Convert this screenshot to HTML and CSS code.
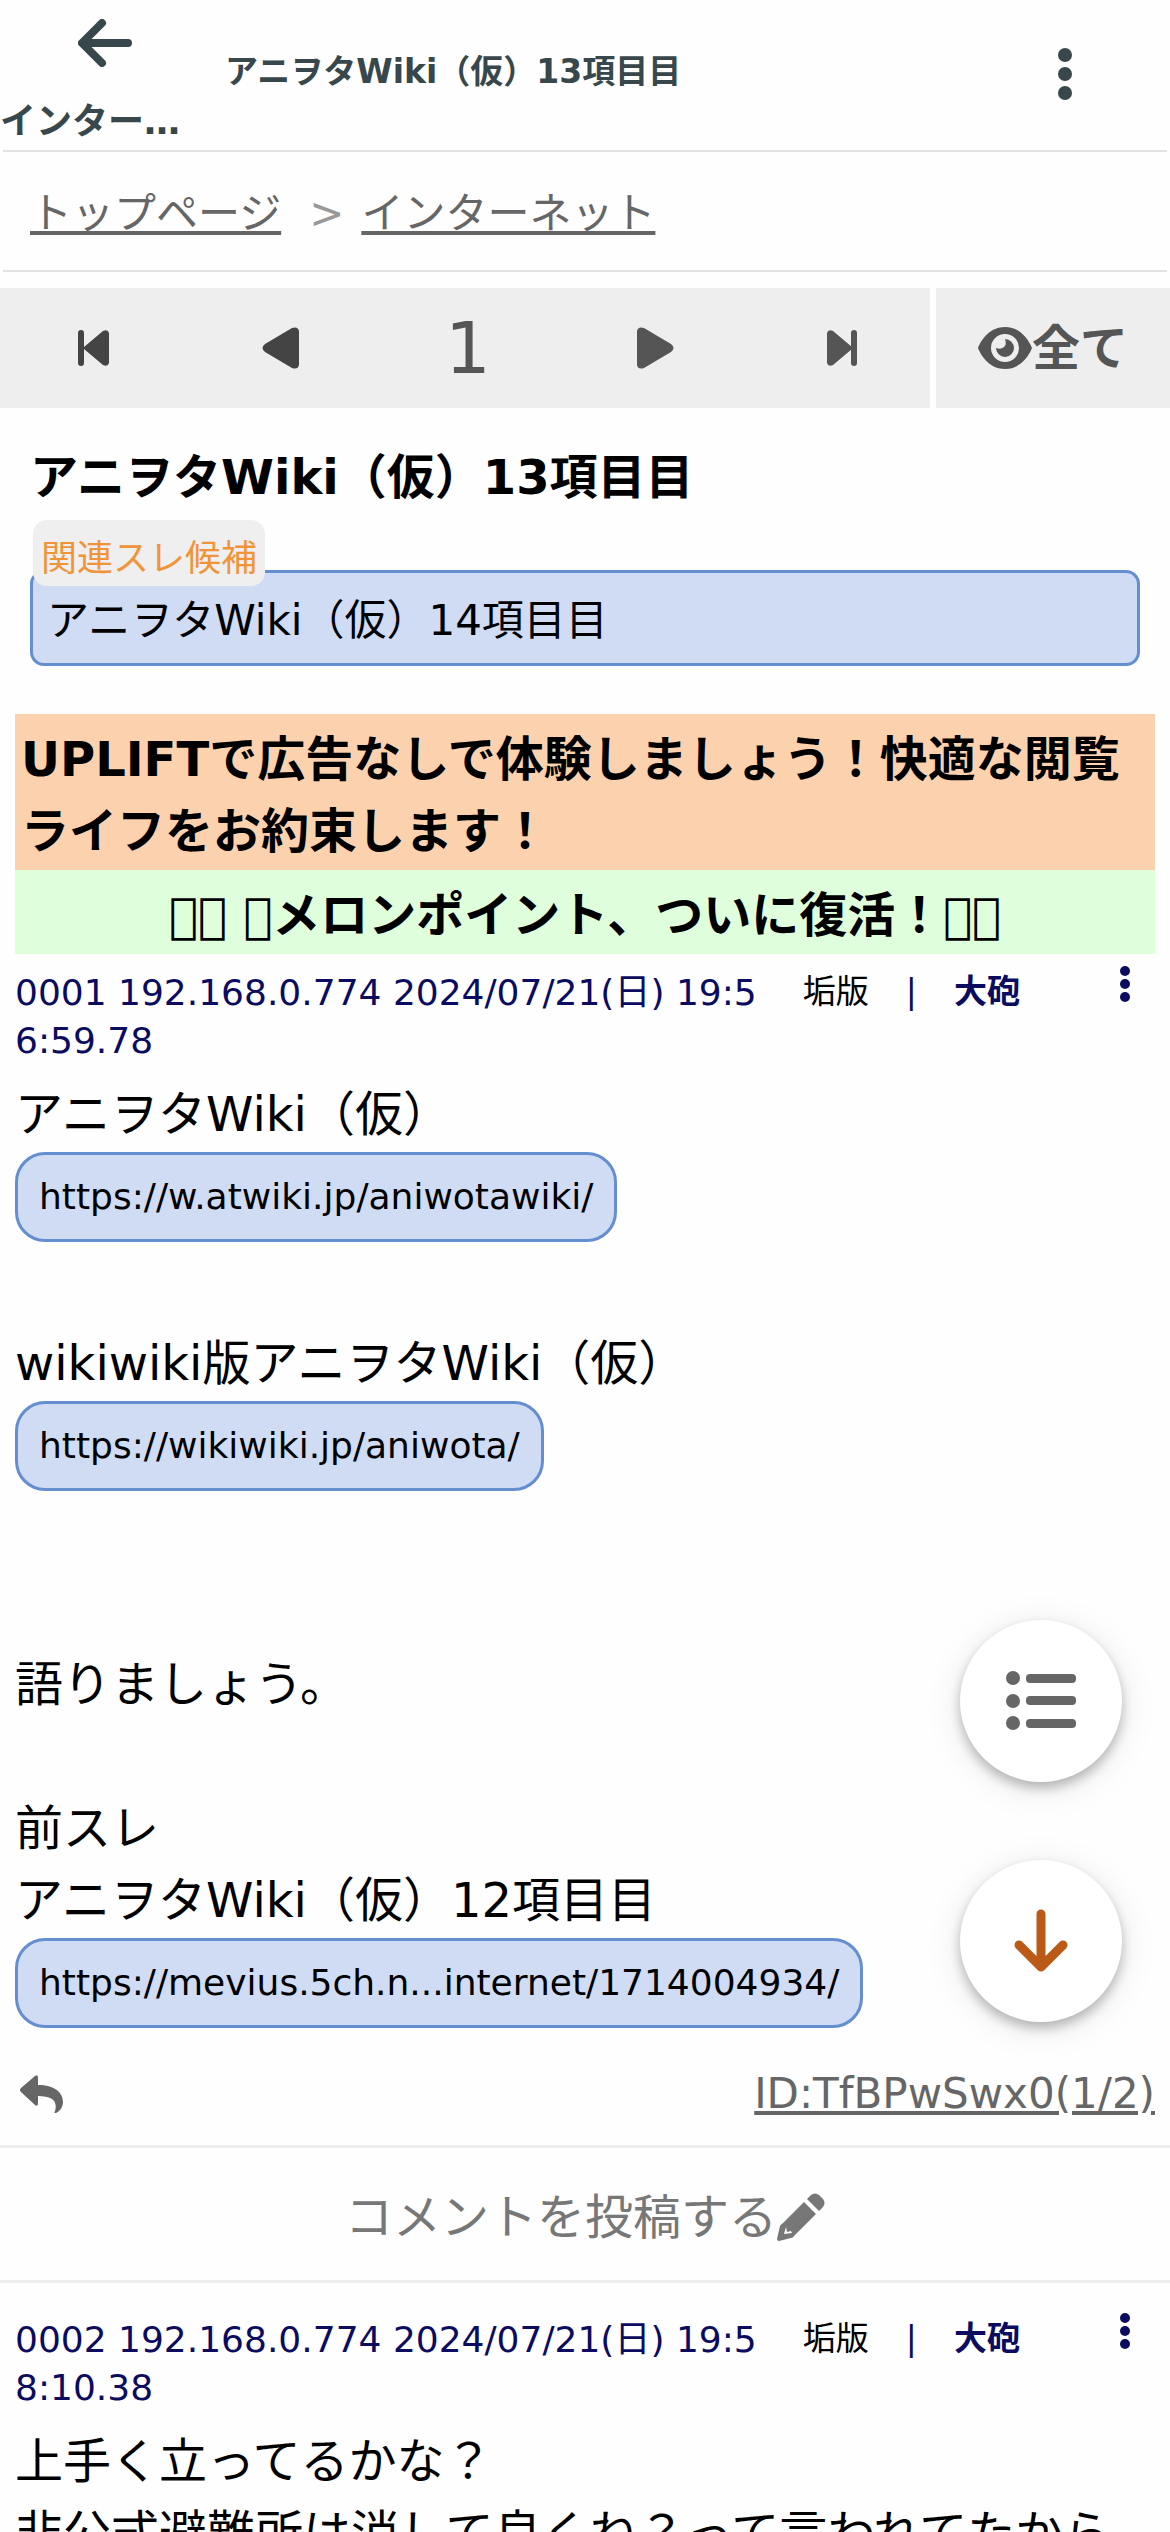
FILE: index.html
```html
<!DOCTYPE html>
<html lang="ja">

<head>
  <meta charset="UTF-8">
  <meta name="viewport" content="width=device-width, initial-scale=1.0">
  <title>アニヲタWiki（仮）13項目目</title>
  <link rel="stylesheet" href="styles.css">
</head>

<body>
  <header class="topbar">
    <a class="back" href="#">
      <svg class="back-icon" viewBox="0 0 54 48" aria-hidden="true">
        <path d="M50 24H5M24 4L4 24l20 20" />
      </svg>
      <span>インター…</span>
    </a>
    <div class="topbar-title">アニヲタWiki（仮）13項目目</div>
    <button type="button" class="topbar-menu" aria-label="メニュー">
      <svg viewBox="0 0 14 52" aria-hidden="true">
        <circle cx="7" cy="7" r="7" />
        <circle cx="7" cy="26" r="7" />
        <circle cx="7" cy="45" r="7" />
      </svg>
    </button>
  </header>

  <nav class="breadcrumb">
    <a href="#">トップページ</a>
    <span class="separator">&gt;</span>
    <a href="#">インターネット</a>
  </nav>

  <nav class="pager">
    <div class="pager-pages">
      <button type="button" class="dark" aria-label="最初">
        <svg width="32" height="36" viewBox="0 0 32 36" aria-hidden="true">
          <rect x="0" y="0" width="6" height="36" rx="3" />
          <path d="M25 1L6 17q-1 1 0 2l19 16q5 2 6-2V3q-1-4-6-2z" />
        </svg>
      </button>
      <button type="button" class="dark" aria-label="前">
        <svg width="38" height="42" viewBox="0 0 38 42" aria-hidden="true">
          <path d="M30 1L3 17q-5 4 0 8l27 16q6 2 7-3V4q-1-5-7-3z" />
        </svg>
      </button>
      <span class="pager-current">1</span>
      <button type="button" aria-label="次">
        <svg width="38" height="42" viewBox="0 0 38 42" aria-hidden="true">
          <path d="M8 1l27 16q5 4 0 8L8 41q-6 2-7-3V4q1-5 7-3z" />
        </svg>
      </button>
      <button type="button" aria-label="最後">
        <svg width="32" height="36" viewBox="0 0 32 36" aria-hidden="true">
          <path d="M7 1l19 16q1 1 0 2L7 35q-5 2-6-2V3q1-4 6-2z" />
          <rect x="25" y="0" width="6" height="36" rx="3" />
        </svg>
      </button>
    </div>
    <button type="button" class="pager-all">
      <svg width="54" height="42" viewBox="0 0 54 42" aria-hidden="true">
        <path fill-rule="evenodd" d="M27 0C13 0 4 11 0 21c4 10 13 21 27 21s23-11 27-21C50 11 41 0 27 0zM27 7a14 14 0 1 1 0 28a14 14 0 1 1 0-28z" />
        <path d="M27 12a9 9 0 1 1-9 9q5 2 8-1t1-8z" />
      </svg>
      <span>全て</span>
    </button>
  </nav>

  <section class="thread-head">
    <h1>アニヲタWiki（仮）13項目目</h1>
    <div class="related">
      <span class="related-label">関連スレ候補</span>
      <a class="related-link" href="#">アニヲタWiki（仮）14項目目</a>
    </div>
  </section>

  <div class="notices">
    <div class="notice uplift">UPLIFTで広告なしで体験しましょう！快適な閲覧ライフをお約束します！</div>
    <div class="notice melon">&#xE900;&#xE901; &#xE902;メロンポイント、ついに復活！&#xE901;&#xE900;</div>
  </div>

  <article class="post">
    <div class="post-head">
      <span class="post-info">0001 192.168.0.774 2024/07/21(日) 19:56:59.78</span>
      <span class="post-tools">
        <span class="plain">垢版</span>
        <span>|</span>
        <b>大砲</b>
      </span>
      <button type="button" class="post-menu" aria-label="投稿メニュー">
        <svg viewBox="0 0 10 36" aria-hidden="true">
          <circle cx="5" cy="5" r="5" />
          <circle cx="5" cy="18" r="5" />
          <circle cx="5" cy="31" r="5" />
        </svg>
      </button>
    </div>
    <div class="post-body">
      <p>アニヲタWiki（仮）</p>
      <a class="link" href="#">https://w.atwiki.jp/aniwotawiki/</a>
      <p class="gap">wikiwiki版アニヲタWiki（仮）</p>
      <a class="link" href="#">https://wikiwiki.jp/aniwota/</a>
      <p class="gap"><br>語りましょう。<br><br>前スレ<br>アニヲタWiki（仮）12項目目</p>
      <a class="link" href="#">https://mevius.5ch.n...internet/1714004934/</a>
    </div>
    <div class="post-foot">
      <button type="button" class="reply" aria-label="返信">
        <svg viewBox="0 0 44 38" aria-hidden="true">
          <path d="M1 13L15 1q3-2 3 2v7c16 0 25 7 25 17 0 5-3 9-7 11-1 0-2 0-1-2 3-10-3-15-17-15v7q0 4-3 2L1 17q-2-2 0-4z" />
        </svg>
      </button>
      <a class="post-id" href="#">ID:TfBPwSwx0(1/2)</a>
    </div>
  </article>

  <button type="button" class="comment">
    <span>コメントを投稿する</span>
    <svg viewBox="0 0 48 48" aria-hidden="true">
      <path fill-rule="evenodd" d="M27 9l12 12-22 22q-1 2-3 2L2 48q-2 0-2-2l3-13q0-1 2-2zM9 34l-2 7 8-1-1-2-4 1z" />
      <path d="M30 6l4-4q4-3 8 0l4 4q3 4 0 8l-4 4z" />
    </svg>
  </button>

  <article class="post second">
    <div class="post-head">
      <span class="post-info">0002 192.168.0.774 2024/07/21(日) 19:58:10.38</span>
      <span class="post-tools">
        <span class="plain">垢版</span>
        <span>|</span>
        <b>大砲</b>
      </span>
      <button type="button" class="post-menu" aria-label="投稿メニュー">
        <svg viewBox="0 0 10 36" aria-hidden="true">
          <circle cx="5" cy="5" r="5" />
          <circle cx="5" cy="18" r="5" />
          <circle cx="5" cy="31" r="5" />
        </svg>
      </button>
    </div>
    <div class="post-body">
      <p>上手く立ってるかな？<br>非公式避難所は消して良くね？って言われてたから</p>
    </div>
  </article>

  <div class="floating">
    <button type="button" class="list" aria-label="一覧">
      <svg width="70" height="60" viewBox="0 0 70 60" aria-hidden="true">
        <circle cx="7" cy="7" r="7" />
        <circle cx="7" cy="30" r="7" />
        <circle cx="7" cy="52" r="7" />
        <rect x="20" y="3" width="50" height="9" rx="4" />
        <rect x="20" y="25" width="50" height="9" rx="4" />
        <rect x="20" y="48" width="50" height="9" rx="4" />
      </svg>
    </button>
    <button type="button" class="down" aria-label="一番下へ">
      <svg width="54" height="64" viewBox="0 0 54 64" aria-hidden="true">
        <path d="M27 5v52M5 36l22 22 22-22" />
      </svg>
    </button>
  </div>
</body>

</html>
```

FILE: styles.css
```css
* {
  box-sizing: border-box;
}

body {
  margin: 0;
  height: 100vh;
  overflow: hidden;
  background: #fefefe;
  color: #000;
  font-family: "DejaVu Sans", "Noto Sans CJK JP", sans-serif;
  font-size: 48px;
  line-height: 72px;
}

button {
  display: flex;
  align-items: center;
  justify-content: center;
  padding: 0;
  border: none;
  background: none;
  color: inherit;
  font: inherit;
  cursor: pointer;
}

svg {
  display: block;
  fill: currentColor;
}

h1,
p {
  margin: 0;
}

/* Header */
.topbar {
  display: flex;
  align-items: center;
  height: 152px;
  margin: 0 3px;
  border-bottom: 2px solid #e2e2e2;
  color: #37474b;
  font-weight: bold;
}

.back {
  display: flex;
  flex-direction: column;
  width: 210px;
  margin-left: -3px;
  padding-top: 18px;
  color: inherit;
  font-size: 36px;
  line-height: 54px;
  text-decoration: none;
}

.back-icon {
  width: 54px;
  height: 48px;
  margin: 0 auto 28px;
  fill: none;
  stroke: currentColor;
  stroke-width: 8;
  stroke-linecap: round;
  stroke-linejoin: round;
}

.topbar-title {
  flex: 1;
  padding-left: 15px;
  padding-bottom: 6px;
  font-size: 33px;
  line-height: 48px;
}

.topbar-menu {
  width: 210px;
  margin-right: -3px;
  padding-bottom: 3px;
}

.topbar-menu svg {
  width: 14px;
  height: 52px;
}

.breadcrumb {
  display: flex;
  align-items: center;
  height: 120px;
  margin: 0 3px;
  padding: 5px 27px 0;
  border-bottom: 2px solid #e2e2e2;
  font-size: 42px;
  color: #999;
}

.breadcrumb a {
  color: #666;
}

.separator {
  padding: 0 17px 0 28px;
}

/* Page navigation */
.pager {
  display: flex;
  height: 120px;
  margin-top: 16px;
  color: #555;
}

.pager-pages {
  display: flex;
  flex: 1;
  background: #eee;
}

.pager-pages > * {
  flex: 1;
}

.pager .dark {
  color: #444;
}

.pager-current {
  align-self: center;
  font-size: 72px;
  text-align: center;
}

.pager-all {
  width: 20%;
  background: #eee;
  box-shadow: -6px 0 #fefefe;
  font-weight: bold;
}

.thread-head {
  padding: 33px 30px 48px;
}

.thread-head h1 {
  font-size: 48px;
  line-height: 72px;
}

.related {
  position: relative;
  margin-top: 57px;
}

.related-link {
  display: block;
  padding: 20px 14px 14px;
  border: 3px solid #648ed0;
  border-radius: 14px;
  background: #cfdcf4;
  color: #000;
  font-size: 42px;
  line-height: 56px;
  text-decoration: none;
}

/* sits over the top edge of the related thread */
.related-label {
  position: absolute;
  left: 3px;
  bottom: 80px;
  padding: 12px 8px 0;
  border-radius: 14px;
  background: #efefef;
  color: #f0943a;
  font-size: 36px;
  line-height: 54px;
}

.notices {
  margin: 0 15px;
  font-weight: bold;
}

.notice {
  padding: 9px 6px 3px;
}

.uplift {
  background: #fcd2ae;
}

.melon {
  background: #dfffdc;
  text-align: center;
}

/* Posts */
.post {
  border-bottom: 3px solid #eee;
}

.post-head {
  display: flex;
  align-items: flex-start;
  padding: 12px 15px 0;
  color: #0b0b60;
  font-size: 36px;
  line-height: 48px;
}

.post-info {
  width: 67%;
  padding-top: 3px;
  word-break: break-all;
}

.post-tools {
  display: flex;
  flex: 1;
  gap: 37px;
  margin-left: 24px;
  padding-top: 2px;
  font-size: 33px;
}

.plain {
  color: #000;
}

.post-menu {
  padding: 0 25px;
}

.post-menu svg {
  width: 10px;
  height: 36px;
}

.post-body {
  padding: 13px 15px 0;
}

.link {
  display: block;
  width: fit-content;
  margin-top: 2px;
  padding: 16px 21px;
  border: 3px solid #648ed0;
  border-radius: 30px;
  background: #cfdcf4;
  color: #000;
  font-size: 36px;
  line-height: 52px;
  text-decoration: none;
}

.gap {
  padding-top: 85px;
}

.post-foot {
  display: flex;
  align-items: center;
  justify-content: space-between;
  padding: 42px 15px 27px;
  color: #666;
}

.reply {
  padding-left: 5px;
}

.reply svg {
  width: 44px;
  height: 38px;
}

.post-id {
  color: inherit;
  font-size: 42px;
  line-height: 48px;
}

.comment {
  width: 100%;
  height: 135px;
  padding-top: 6px;
  border-bottom: 3px solid #eee;
  color: #777;
}

.comment svg {
  width: 48px;
  height: 48px;
}

.second {
  padding-top: 18px;
}

/* Buttons that stay over the thread */
.floating {
  position: fixed;
  right: 48px;
  bottom: 510px;
  display: flex;
  flex-direction: column;
  gap: 78px;
}

.floating button {
  width: 162px;
  height: 162px;
  border-radius: 50%;
  background: #fff;
  box-shadow: 0 6px 12px rgba(0, 0, 0, 0.25), 0 6px 36px rgba(0, 0, 0, 0.1);
}

.list {
  color: #666;
}

.down svg {
  fill: none;
  stroke: #bb5a17;
  stroke-width: 9;
  stroke-linecap: round;
  stroke-linejoin: round;
}
```
